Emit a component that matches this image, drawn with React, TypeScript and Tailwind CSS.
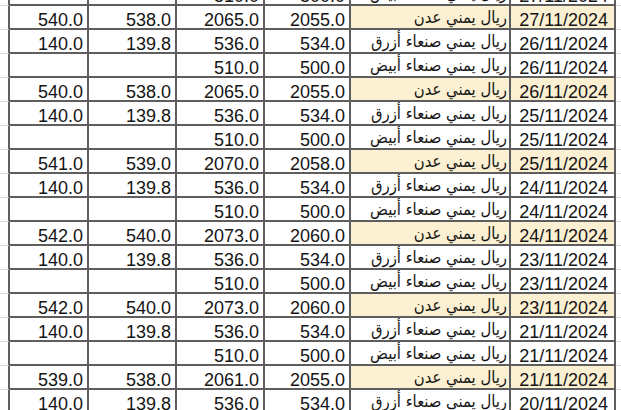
const AZRAQ = 'ريال يمني صنعاء أزرق';
const ABYAD = 'ريال يمني صنعاء أبيض';
const ADEN = 'ريال يمني عدن';

type Row = {
  sell?: string;
  buy?: string;
  a: string;
  b: string;
  name: string;
  date: string;
};

const rows: Row[] = [
  { a: '510.0', b: '500.0', name: ABYAD, date: '27/11/2024' },
  { sell: '540.0', buy: '538.0', a: '2065.0', b: '2055.0', name: ADEN, date: '27/11/2024' },
  { sell: '140.0', buy: '139.8', a: '536.0', b: '534.0', name: AZRAQ, date: '26/11/2024' },
  { a: '510.0', b: '500.0', name: ABYAD, date: '26/11/2024' },
  { sell: '540.0', buy: '538.0', a: '2065.0', b: '2055.0', name: ADEN, date: '26/11/2024' },
  { sell: '140.0', buy: '139.8', a: '536.0', b: '534.0', name: AZRAQ, date: '25/11/2024' },
  { a: '510.0', b: '500.0', name: ABYAD, date: '25/11/2024' },
  { sell: '541.0', buy: '539.0', a: '2070.0', b: '2058.0', name: ADEN, date: '25/11/2024' },
  { sell: '140.0', buy: '139.8', a: '536.0', b: '534.0', name: AZRAQ, date: '24/11/2024' },
  { a: '510.0', b: '500.0', name: ABYAD, date: '24/11/2024' },
  { sell: '542.0', buy: '540.0', a: '2073.0', b: '2060.0', name: ADEN, date: '24/11/2024' },
  { sell: '140.0', buy: '139.8', a: '536.0', b: '534.0', name: AZRAQ, date: '23/11/2024' },
  { a: '510.0', b: '500.0', name: ABYAD, date: '23/11/2024' },
  { sell: '542.0', buy: '540.0', a: '2073.0', b: '2060.0', name: ADEN, date: '23/11/2024' },
  { sell: '140.0', buy: '139.8', a: '536.0', b: '534.0', name: AZRAQ, date: '21/11/2024' },
  { a: '510.0', b: '500.0', name: ABYAD, date: '21/11/2024' },
  { sell: '539.0', buy: '538.0', a: '2061.0', b: '2055.0', name: ADEN, date: '21/11/2024' },
  { sell: '140.0', buy: '139.8', a: '536.0', b: '534.0', name: AZRAQ, date: '20/11/2024' },
];

function NumCell({ value, fill }: { value?: string; fill?: boolean }) {
  return (
    <div
      className={`h-[24px] border-r-2 border-b-2 border-[#5e5e5e] pr-[4px] pt-[3px] text-right text-[18px] leading-[22px] text-[#141414] ${
        fill ? 'bg-[#fcf0d2]' : ''
      }`}
    >
      {value}
    </div>
  );
}

export default function App() {
  return (
    <div className="w-[621px] h-[410px] overflow-hidden bg-white font-['Liberation_Sans',Arial,sans-serif]">
      <div className="-mt-[18px]">
        {rows.map((r, i) => {
          const aden = r.name === ADEN;
          return (
            <div
              key={i}
              className="grid grid-cols-[10px_79px_88px_88px_86px_160px_105px_1fr]"
            >
              <div className="h-[24px] border-r-2 border-b border-r-[#5e5e5e] border-b-[#d9d9d9]" />
              <NumCell value={r.sell} />
              <NumCell value={r.buy} />
              <NumCell value={r.a} />
              <NumCell value={r.b} />
              <div
                dir="rtl"
                className={`h-[24px] border-r-2 border-b-2 border-[#5e5e5e] pr-[2px] pt-[1px] text-right font-['DejaVu_Sans_Condensed','DejaVu_Sans',sans-serif] text-[16.5px] leading-[22px] text-[#141414] ${
                  aden ? 'bg-[#fcf0d2]' : ''
                }`}
              >
                {r.name}
              </div>
              <div
                className={`h-[24px] border-r-2 border-b-2 border-[#5e5e5e] pr-[6px] pt-[3px] text-right text-[18px] leading-[22px] text-[#141414] ${
                  aden ? 'bg-[#fcf0d2]' : ''
                }`}
              >
                {r.date}
              </div>
              <div className="h-[24px] border-b border-[#d9d9d9]" />
            </div>
          );
        })}
      </div>
    </div>
  );
}
